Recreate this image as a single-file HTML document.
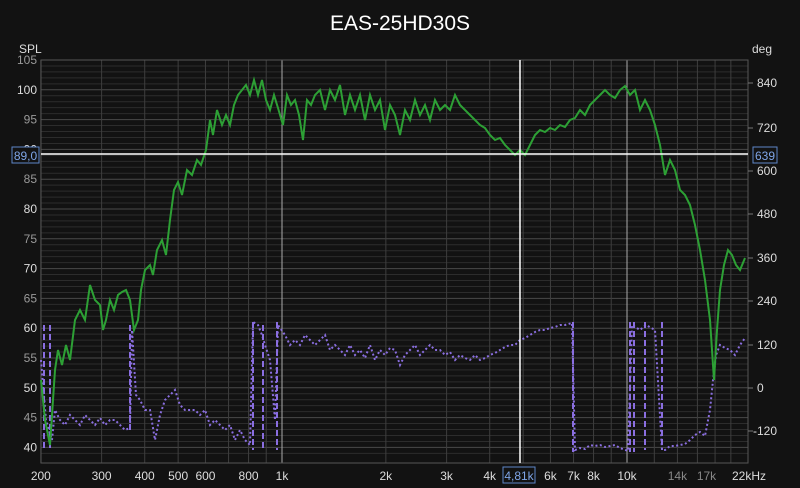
<!DOCTYPE html>
<html><head><meta charset="utf-8"><style>
html,body{margin:0;padding:0;background:#121212;}
body{width:800px;height:488px;overflow:hidden;font-family:"Liberation Sans","DejaVu Sans",sans-serif;}
svg{display:block}
</style></head><body>
<svg id="s" width="800" height="488" xmlns="http://www.w3.org/2000/svg" font-family="Liberation Sans, DejaVu Sans, sans-serif">
<rect width="800" height="488" fill="#121212"/>
<text x="400" y="30" fill="#ffffff" font-size="21" text-anchor="middle">EAS-25HD30S</text>
<text x="19" y="53" fill="#dddddd" font-size="12">SPL</text>
<text x="752" y="53" fill="#dddddd" font-size="12">deg</text>
<g id="grid"></g>
<g id="labels" font-size="12"></g>
<polyline id="ph" fill="none" stroke="#8a6ee0" stroke-width="2" stroke-dasharray="2,2.5" points=""/>
<g id="dash" stroke="#8a6ee0" stroke-width="2" stroke-dasharray="6,3"></g>
<polyline id="gr" fill="none" stroke="#2da035" stroke-width="2" points=""/>
<line x1="41" y1="154" x2="748" y2="154" stroke="#fff" stroke-width="1.5"/>
<line x1="520" y1="60" x2="520" y2="463" stroke="#fff" stroke-width="1.5"/>
<rect x="12" y="147" width="27" height="16" fill="#121212" stroke="#5d86c8"/>
<text x="25.5" y="160" fill="#7fa6e8" font-size="12" text-anchor="middle">89,0</text>
<rect x="753" y="147" width="24" height="16" fill="#121212" stroke="#5d86c8"/>
<text x="765" y="160" fill="#7fa6e8" font-size="12" text-anchor="middle">639</text>
<rect x="503" y="467" width="32" height="16" fill="#121212" stroke="#5d86c8"/>
<text x="519" y="480" fill="#7fa6e8" font-size="12" text-anchor="middle">4,81k</text>
</svg>
<script>
var L=41,R=748,T=60,B=463,ns="http://www.w3.org/2000/svg";
function fx(f){return 282+345*Math.log10(f/1000);}
function yS(d){return 60+(105-d)*5.96;}
function el(p,t,a){var e=document.createElementNS(ns,t);for(var k in a)e.setAttribute(k,a[k]);p.appendChild(e);return e;}
var g=document.getElementById('grid'),lb=document.getElementById('labels');
for(var d=39;d<=105;d++){var y=yS(d);if(y>B)continue;el(g,'line',{x1:L,x2:R,y1:y,y2:y,stroke:d%5==0?'#4a4a4a':'#2c2c2c','stroke-width':1});}
var fs=[200,300,400,500,600,700,800,900,1000,2000,3000,4000,5000,6000,7000,8000,9000,10000,12000,14000,16000,18000,20000];
fs.forEach(function(f){var x=fx(f);el(g,'line',{x1:x,x2:x,y1:T,y2:B,stroke:(f==1000||f==10000)?'#aaaaaa':'#3e3e3e','stroke-width':1});});
el(g,'rect',{x:L,y:T,width:R-L,height:B-T,fill:'none',stroke:'#555'});
for(var d=40;d<=105;d+=5){var t=el(lb,'text',{x:37,y:yS(d)+4,fill:d%10==0?'#dddddd':'#999999','text-anchor':'end'});t.textContent=d;}
var ph=[[840,83],[720,128],[600,171],[480,214],[360,258],[240,301],[120,345],[0,388],[-120,431]];
ph.forEach(function(p){el(lb,'line',{x1:748,x2:753,y1:p[1],y2:p[1],stroke:'#777'});var t=el(lb,'text',{x:p[0]<0?753:757,y:p[1]+4,fill:'#dddddd'});t.textContent=p[0];});
var xl=[[200,'200','#ddd'],[300,'300','#ddd'],[400,'400','#ddd'],[500,'500','#ddd'],[600,'600','#ddd'],[800,'800','#ddd'],[1000,'1k','#ddd'],[2000,'2k','#ddd'],[3000,'3k','#ddd'],[4000,'4k','#ddd'],[6000,'6k','#ddd'],[7000,'7k','#ddd'],[8000,'8k','#ddd'],[10000,'10k','#ddd'],[14000,'14k','#888'],[17000,'17k','#888']];
xl.forEach(function(a){var t=el(lb,'text',{x:fx(a[0]),y:480,fill:a[2],'text-anchor':'middle'});t.textContent=a[1];});
var t=el(lb,'text',{x:732,y:480,fill:'#ddd'});t.textContent='22kHz';
document.getElementById('gr').setAttribute('points',"41,380 45,420 50,445 55,370 58,350 62,365 66,345 70,360 75,320 80,310 85,320 90,285 95,300 100,305 103,330 106,320 110,300 114,310 118,295 122,292 126,290 130,300 134,330 138,320 141,290 145,270 150,265 153,275 157,250 162,240 166,255 170,220 174,190 178,182 182,195 187,170 192,175 197,160 201,165 206,150 210,120 213,135 217,110 222,125 226,115 230,125 234,105 238,95 242,90 246,85 250,95 254,80 258,95 262,80 266,100 270,110 274,95 278,108 283,125 287,95 291,105 295,100 299,115 303,140 307,100 311,105 315,95 320,90 325,110 330,90 335,100 340,85 345,115 350,95 355,110 360,95 365,120 370,95 375,110 380,100 385,130 390,105 395,115 400,135 405,110 410,120 415,100 420,115 425,105 430,120 435,100 440,110 445,105 450,110 455,95 460,105 465,110 470,115 475,120 480,125 485,128 490,135 495,140 500,138 505,145 510,150 515,155 520,150 525,155 530,145 535,135 540,130 545,132 550,128 555,130 560,125 565,127 570,120 575,118 580,110 585,115 590,105 595,100 600,95 605,90 610,95 615,98 620,90 625,86 630,95 635,90 640,110 645,100 650,110 655,125 660,145 665,175 670,160 675,170 680,190 685,195 690,205 695,225 700,250 705,280 710,320 714,380 717,330 720,290 724,265 728,250 732,255 736,265 740,270 745,258");
document.getElementById('ph').setAttribute('points',"41,360 46,420 52,440 55,410 60,420 65,425 70,415 75,420 80,425 85,415 90,420 95,425 100,418 105,425 110,420 115,420 120,425 125,430 130,428 132,330 136,395 140,400 145,410 150,410 155,440 160,415 165,400 170,395 175,390 180,405 185,410 190,410 195,410 200,415 205,410 210,425 215,420 220,425 225,430 230,425 235,440 240,430 245,440 250,445 253,322 258,325 262,335 265,345 270,360 275,420 278,325 285,335 290,345 295,340 300,345 305,335 310,340 315,345 320,340 325,335 330,350 335,345 340,350 345,355 350,345 355,355 360,350 365,358 370,345 375,360 380,350 385,355 390,348 395,350 400,365 405,355 410,350 415,345 420,355 425,350 430,345 435,350 440,350 445,355 450,352 455,360 460,355 465,358 470,360 475,355 480,360 485,358 490,355 495,353 500,350 505,347 510,345 515,345 520,340 525,338 530,335 535,332 540,330 545,330 550,328 555,327 560,325 565,325 572,323 575,450 580,448 585,449 590,445 595,446 600,445 605,447 610,446 615,445 620,448 628,451 632,325 640,330 646,325 655,330 662,450 665,450 670,446 675,446 680,445 685,444 690,440 695,435 700,432 705,436 710,410 713,380 716,355 720,345 725,348 730,350 735,355 740,345 745,338");
var dg=document.getElementById('dash');
[[44,325,450],[50,325,450],[130,325,430],[253,322,450],[263,325,450],[277,322,450],[573,322,452],[630,322,452],[634,322,452],[645,322,450],[662,322,450]].forEach(function(a){el(dg,'line',{x1:a[0],x2:a[0],y1:a[1],y2:a[2]});});
</script>
</body></html>
